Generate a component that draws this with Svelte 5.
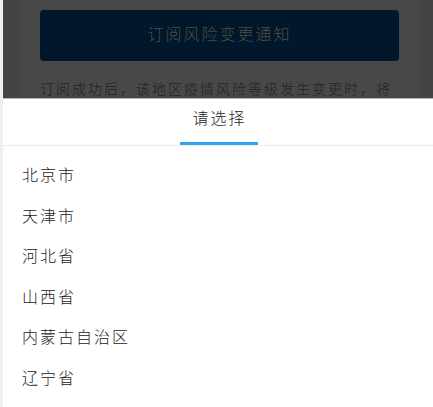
<script>
  const provinces = ['北京市', '天津市', '河北省', '山西省', '内蒙古自治区', '辽宁省'];
</script>

<div class="screen">
  <div class="page">
    <div class="page-inner">
      <button class="subscribe">订阅风险变更通知</button>
      <p class="note">订阅成功后，该地区疫情风险等级发生变更时，将</p>
    </div>
  </div>

  <div class="sheet">
    <div class="tabs">
      <div class="tab">请选择</div>
    </div>
    <ul class="list">
      {#each provinces as name}
        <li>{name}</li>
      {/each}
    </ul>
  </div>
</div>

<style>
  :global(body) {
    margin: 0;
    background: #f0f0f0;
  }

  .screen {
    width: 430px;
    height: 407px;
    margin-left: 3px;
    display: flex;
    flex-direction: column;
    overflow: hidden;
    font-family: "Noto Sans CJK SC", "Noto Sans", sans-serif;
  }

  .page {
    height: 98px;
    flex: none;
    background: #444;
    overflow: hidden;
    padding: 0 14px 0 17px;
  }

  .page-inner {
    height: 100%;
    background: #484848;
    padding: 10px 17px 0 20px;
  }

  .subscribe {
    display: block;
    width: 359px;
    height: 51px;
    padding: 0 0 5px 0;
    border: none;
    border-radius: 4px;
    background: #01172b;
    color: #4d4d45;
    font-family: inherit;
    font-size: 16px;
    font-weight: 300;
    letter-spacing: 2px;
  }

  .note {
    margin: 18px 0 0 0;
    width: 370px;
    font-size: 14px;
    font-weight: 300;
    line-height: 18px;
    letter-spacing: 2px;
    white-space: nowrap;
    color: #222;
  }

  .sheet {
    flex: 1;
    background: #fff;
    border-top: 1px solid #b5b5b5;
  }

  .tabs {
    height: 46px;
    display: flex;
    justify-content: center;
    padding-left: 2px;
    border-bottom: 1px solid #ececec;
  }

  .tab {
    width: 78px;
    height: 46px;
    box-sizing: border-box;
    padding: 6px 0 0 1px;
    border-bottom: 3px solid #2fa4f5;
    margin-bottom: -1px;
    text-align: center;
    font-size: 16px;
    font-weight: 300;
    line-height: 24px;
    letter-spacing: 2px;
    color: #222;
  }

  .list {
    list-style: none;
    margin: 0;
    padding: 8px 0 0 19px;
  }

  .list li {
    height: 40.5px;
    line-height: 40.5px;
    font-size: 16px;
    font-weight: 300;
    letter-spacing: 2px;
    color: #222;
  }
</style>
